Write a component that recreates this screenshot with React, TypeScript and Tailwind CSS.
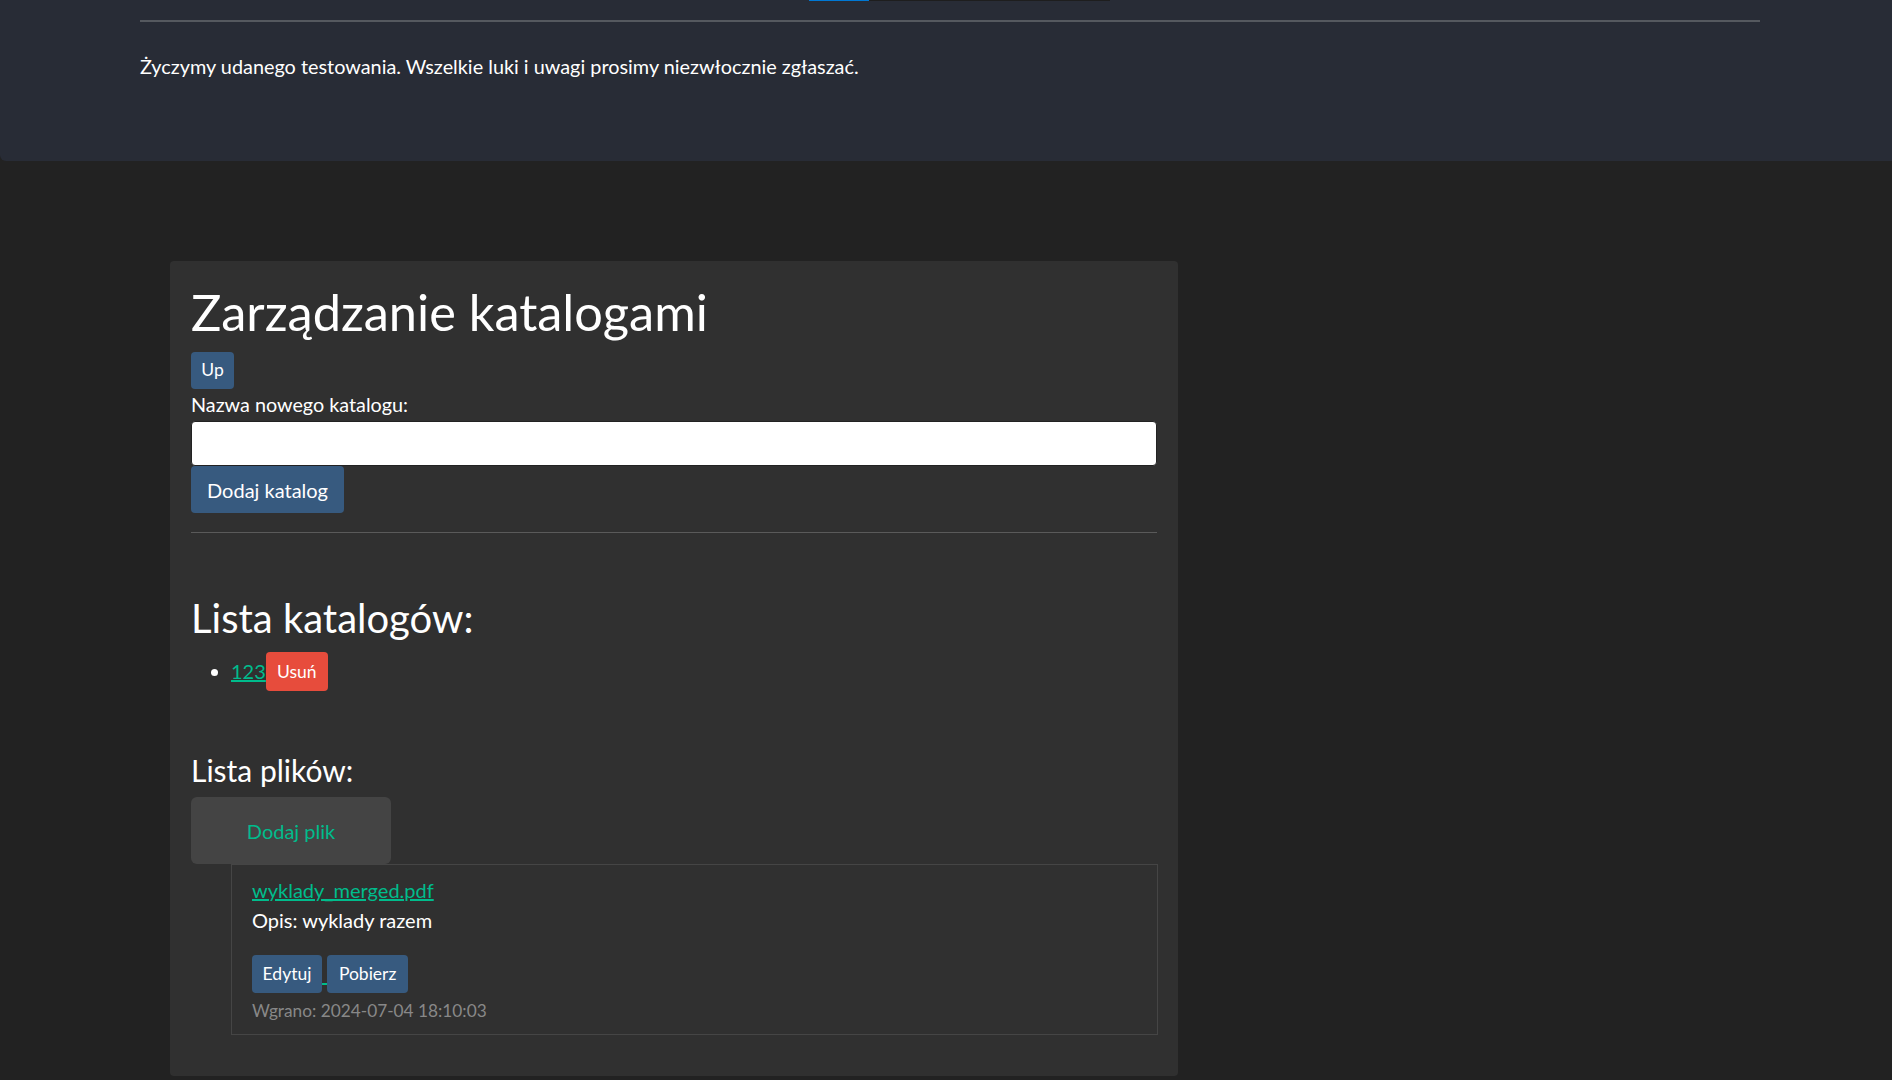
const App = () => {
  return (
    <div className="min-h-screen bg-[#222222] font-['Lato',sans-serif] text-white">
      {/* top banner */}
      <div className="h-[161px] bg-[#282c36] rounded-bl-md">
        <div className="ml-[809px] w-[301px] h-px bg-[#1e1e1e]">
          <div className="w-[60px] h-px bg-[#0078d4]" />
        </div>
        <div className="pl-[140px] pr-[132px]">
          <hr className="mt-[19px] border-0 h-[2px] bg-[#55595f]" />
          <p className="mt-[29px] text-[19.85px] leading-[30px]">
            Życzymy udanego testowania. Wszelkie luki i uwagi prosimy niezwłocznie zgłaszać.
          </p>
        </div>
      </div>

      <div className="pt-[100px] pl-[170px]">
        <div className="w-[1008px] bg-[#303030] rounded px-[21px] pt-[21px] pb-[41px]">
          <h1 className="text-[50.5px] leading-[60px]">Zarządzanie katalogami</h1>
          <button className="mt-[10px] h-[37px] w-[43px] bg-[#375a7f] rounded text-[17.5px] block">Up</button>
          <label className="block text-[19.8px] leading-[30px]">Nazwa nowego katalogu:</label>
          <input
            type="text"
            className="mt-[2px] block w-[966px] h-[45px] bg-white rounded border border-[#222] text-black px-3"
          />
          <button className="block h-[47px] w-[153px] bg-[#375a7f] rounded text-[20px]">Dodaj katalog</button>
          <hr className="mt-[19px] w-[966px] border-0 h-px bg-[#5a5a5a]" />

          <h2 className="mt-[61px] text-[40px] leading-[48px]">Lista katalogów:</h2>
          <ul className="mt-[10px] pl-[40px] list-disc">
            <li className="text-[20px] leading-[39px] marker:text-white">
              <a className="text-[#00bc8c] underline">123</a>
              <button className="h-[39px] w-[62px] bg-[#e74c3c] rounded text-[17.5px] align-top">Usuń</button>
            </li>
          </ul>

          <h4 className="mt-[61px] text-[30px] leading-[36px]">Lista plików:</h4>
          <div className="mt-[9px] w-[200px] h-[67px] bg-[#444444] rounded-md flex items-center justify-center text-[#00bc8c] text-[20px]">
            Dodaj plik
          </div>
          <div className="ml-[40px] w-[927px] border border-[#454545] px-[20px] pt-[10px] pb-[10px]">
            <a className="text-[#00bc8c] underline text-[20px] leading-[30px] block w-fit">wyklady_merged.pdf</a>
            <p className="text-[20px] leading-[30px]">Opis: wyklady razem</p>
            <div className="mt-[20px] leading-[38px]">
              <a className="text-[#00bc8c] underline text-[20px]">
                <button className="h-[38px] w-[70px] bg-[#375a7f] rounded text-white text-[17.5px] align-top">Edytuj</button>
                {" "}
                <button className="h-[38px] w-[81px] bg-[#375a7f] rounded text-white text-[17.5px] align-top">Pobierz</button>
              </a>
            </div>
            <p className="mt-[3px] text-[17.25px] leading-[26px] text-[#888888]">Wgrano: 2024-07-04 18:10:03</p>
          </div>
        </div>
      </div>
    </div>
  );
};

export default App;
